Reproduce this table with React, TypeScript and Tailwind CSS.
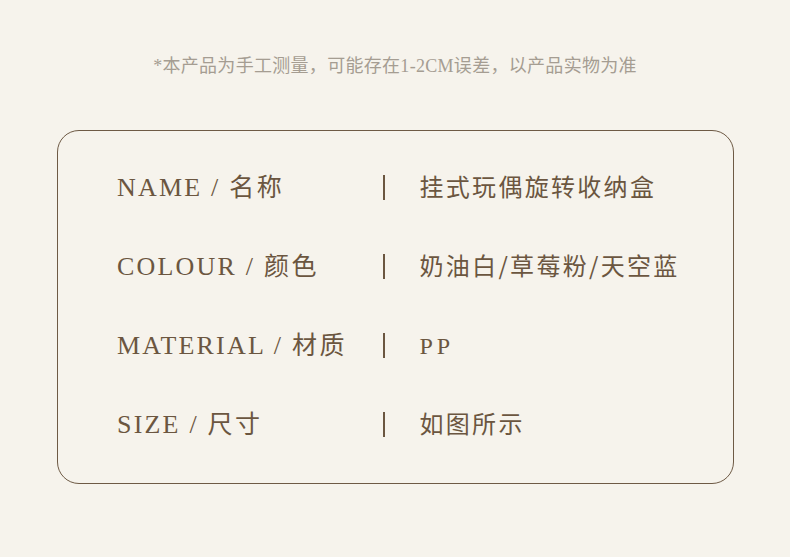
import React from 'react';

const rows = [
  { en: 'NAME', cn: '名称', value: '挂式玩偶旋转收纳盒' },
  { en: 'COLOUR', cn: '颜色', value: '奶油白/草莓粉/天空蓝' },
  { en: 'MATERIAL', cn: '材质', value: 'PP' },
  { en: 'SIZE', cn: '尺寸', value: '如图所示' },
];

const App: React.FC = () => {
  return (
    <div className="w-[790px] h-[557px] bg-[#f6f3ec] overflow-hidden font-['Liberation_Serif','Noto_Sans_CJK_SC',serif]">
      {/* note */}
      <div className="pt-[54px] h-[130px] text-center text-[18px] leading-[24px] tracking-[0.3px] text-[#a59d92]">
        *本产品为手工测量，可能存在1-2CM误差，以产品实物为准
      </div>

      {/* spec box */}
      <div className="mx-[57px] w-[677px] h-[354px] border border-[#6e5a45] rounded-[22px] pl-[59px] pt-[17px]">
        {rows.map((row) => (
          <div key={row.en} className="flex items-center h-[79px] text-[#6b5640]">
            <div className="w-[266px] text-[26px] tracking-[2.2px] whitespace-nowrap">
              {row.en} / <span className="text-[25px] tracking-[2.5px]">{row.cn}</span>
            </div>
            <div className="w-[1.5px] h-[25px] bg-[#6b5640]" />
            <div
              className={`pl-[35px] text-[24px] whitespace-nowrap ${
                row.value === 'PP'
                  ? 'tracking-[4px]'
                  : "tracking-[2.3px] leading-[32px] pb-[4px] font-['Noto_Sans_CJK_SC',sans-serif]"
              }`}
            >
              {row.value}
            </div>
          </div>
        ))}
      </div>
    </div>
  );
};

export default App;
